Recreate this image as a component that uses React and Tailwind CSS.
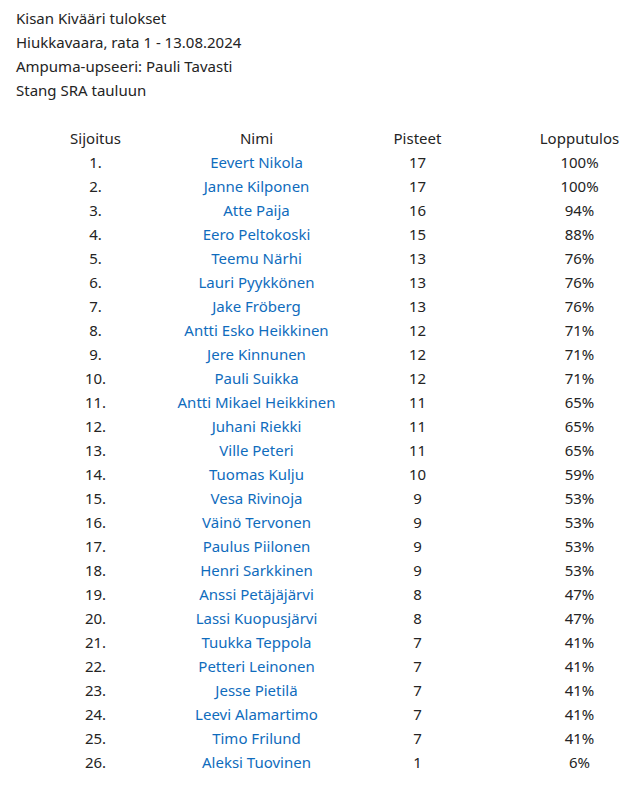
const results = [
  ['Eevert Nikola', 17, '100%'],
  ['Janne Kilponen', 17, '100%'],
  ['Atte Paija', 16, '94%'],
  ['Eero Peltokoski', 15, '88%'],
  ['Teemu Närhi', 13, '76%'],
  ['Lauri Pyykkönen', 13, '76%'],
  ['Jake Fröberg', 13, '76%'],
  ['Antti Esko Heikkinen', 12, '71%'],
  ['Jere Kinnunen', 12, '71%'],
  ['Pauli Suikka', 12, '71%'],
  ['Antti Mikael Heikkinen', 11, '65%'],
  ['Juhani Riekki', 11, '65%'],
  ['Ville Peteri', 11, '65%'],
  ['Tuomas Kulju', 10, '59%'],
  ['Vesa Rivinoja', 9, '53%'],
  ['Väinö Tervonen', 9, '53%'],
  ['Paulus Piilonen', 9, '53%'],
  ['Henri Sarkkinen', 9, '53%'],
  ['Anssi Petäjäjärvi', 8, '47%'],
  ['Lassi Kuopusjärvi', 8, '47%'],
  ['Tuukka Teppola', 7, '41%'],
  ['Petteri Leinonen', 7, '41%'],
  ['Jesse Pietilä', 7, '41%'],
  ['Leevi Alamartimo', 7, '41%'],
  ['Timo Frilund', 7, '41%'],
  ['Aleksi Tuovinen', 1, '6%'],
]

export default function App() {
  return (
    <div className="min-h-[788px] bg-white overflow-hidden text-[15px] leading-6 text-[#242424] font-['Segoe_UI','Noto_Sans',sans-serif] pt-[6px]">
      <div className="px-4">
        <div>Kisan Kivääri tulokset</div>
        <div>Hiukkavaara, rata 1 - 13.08.2024</div>
        <div>Ampuma-upseeri: Pauli Tavasti</div>
        <div>Stang SRA tauluun</div>
      </div>

      <div className="mt-6 ml-[15px] w-[644px] grid grid-cols-[161px_161px_161px_161px] text-center">
        <div>Sijoitus</div>
        <div>Nimi</div>
        <div>Pisteet</div>
        <div className="pl-[2px]">Lopputulos</div>
        {results.map(([name, points, pct], i) => (
          <div key={name} className="contents">
            <div>{i + 1}.</div>
            <div>
              <a href="#" className="text-[#0f6cbd]">{name}</a>
            </div>
            <div>{points}</div>
            <div className="pl-[2px]">{pct}</div>
          </div>
        ))}
      </div>
    </div>
  )
}
